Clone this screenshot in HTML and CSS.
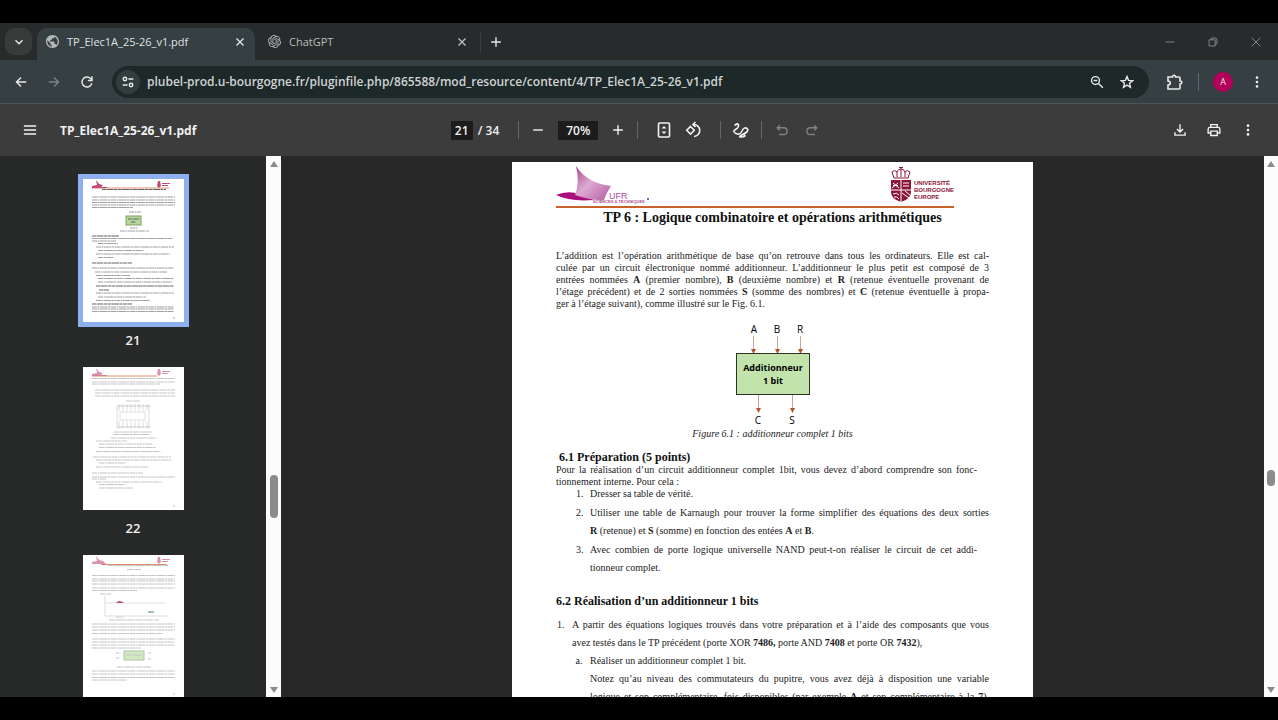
FILE: index.html
```html
<!DOCTYPE html>
<html lang="fr">
<head>
  <meta charset="UTF-8" />
  <title>TP_Elec1A_25-26_v1.pdf</title>
  <link rel="stylesheet" href="styles.css">
</head>
<body>

  <div class="browser">

    <!-- tab strip -->
    <div class="tab-strip">
      <button class="tab-search" aria-label="Rechercher dans les onglets">
        <svg class="icon" viewBox="0 0 16 16"><path d="M4 6l4 4 4-4"/></svg>
      </button>
      <div class="tab active">
        <svg class="favicon" viewBox="2 2 20 20"><path d="M12 2C6.48 2 2 6.48 2 12s4.480 10 10 10 10-4.480 10-10S17.520 2 12 2zm-1 17.930c-3.950-.49-7-3.850-7-7.930 0-.62.08-1.210.21-1.790L9 15v1c0 1.100.9 2 2 2v1.930zm6.900-2.540c-.26-.81-1-1.390-1.900-1.390h-1v-3c0-.55-.45-1-1-1H8v-2h2c.55 0 1-.45 1-1V7h2c1.100 0 2-.9 2-2v-.41c2.930 1.190 5 4.060 5 7.410 0 2.080-.8 3.970-2.100 5.390z"/></svg>
        <span class="tab-title">TP_Elec1A_25-26_v1.pdf</span>
        <button class="tab-close" aria-label="Fermer"><svg class="icon" viewBox="0 0 16 16"><path d="M4 4l8 8M12 4l-8 8"/></svg></button>
      </div>
      <div class="tab">
        <svg class="favicon" viewBox="0 0 24 24"><path d="M22.2819 9.8211a5.9847 5.9847 0 0 0-.5157-4.9108 6.0462 6.0462 0 0 0-6.5098-2.9A6.0651 6.0651 0 0 0 4.9807 4.1818a5.9847 5.9847 0 0 0-3.9977 2.9 6.0462 6.0462 0 0 0 .7427 7.0966 5.98 5.98 0 0 0 .511 4.9107 6.051 6.051 0 0 0 6.5146 2.9001A5.9847 5.9847 0 0 0 13.2599 24a6.0557 6.0557 0 0 0 5.7718-4.2058 5.9894 5.9894 0 0 0 3.9977-2.9001 6.0557 6.0557 0 0 0-.7475-7.0729zm-9.022 12.6081a4.4755 4.4755 0 0 1-2.8764-1.0408l.1419-.0804 4.7783-2.7582a.7948.7948 0 0 0 .3927-.6813v-6.7369l2.02 1.1686a.071.071 0 0 1 .038.0615v5.5826a4.504 4.504 0 0 1-4.4945 4.4944zm-9.6607-4.1254a4.4708 4.4708 0 0 1-.5346-3.0137l.142.0852 4.783 2.7582a.7712.7712 0 0 0 .7806 0l5.8428-3.3685v2.3324a.0804.0804 0 0 1-.0332.0615L9.74 19.9502a4.4992 4.4992 0 0 1-6.1408-1.6464zM2.3408 7.8956a4.485 4.485 0 0 1 2.3655-1.9728V11.6a.7664.7664 0 0 0 .3879.6765l5.8144 3.3543-2.0201 1.1685a.0757.0757 0 0 1-.071 0l-4.8303-2.7865A4.504 4.504 0 0 1 2.3408 7.872zm16.5963 3.8558L13.1038 8.364 15.1192 7.2a.0757.0757 0 0 1 .071 0l4.8303 2.7913a4.4944 4.4944 0 0 1-.6765 8.1042v-5.6772a.79.79 0 0 0-.407-.667zm2.0107-3.0231l-.142-.0852-4.7735-2.7818a.7759.7759 0 0 0-.7854 0L9.409 9.2297V6.8974a.0662.0662 0 0 1 .0284-.0615l4.8303-2.7866a4.4992 4.4992 0 0 1 6.6802 4.66zM8.3065 12.863l-2.02-1.1638a.0804.0804 0 0 1-.038-.0567V6.0742a4.4992 4.4992 0 0 1 7.3757-3.4537l-.142.0805L8.704 5.459a.7948.7948 0 0 0-.3927.6813zm1.0976-2.3654l2.602-1.4998 2.6069 1.4998v2.9994l-2.5974 1.4997-2.6067-1.4997Z"/></svg>
        <span class="tab-title">ChatGPT</span>
        <button class="tab-close" aria-label="Fermer"><svg class="icon" viewBox="0 0 16 16"><path d="M4 4l8 8M12 4l-8 8"/></svg></button>
      </div>
      <button class="new-tab" aria-label="Nouvel onglet"><svg class="icon" viewBox="0 0 16 16"><path d="M8 2.500v11M2.500 8h11"/></svg></button>
      <div class="window-controls">
        <button aria-label="Réduire"><svg class="icon thin" viewBox="0 0 16 16"><path d="M3 8h10"/></svg></button>
        <button aria-label="Restaurer"><svg class="icon thin" viewBox="0 0 16 16"><path d="M3.500 5.500h7v7h-7zM6 5.500V3.500h4.500q2 0 2 2V10h-2"/></svg></button>
        <button aria-label="Fermer la fenêtre"><svg class="icon thin" viewBox="0 0 16 16"><path d="M3 3l10 10M13 3L3 13"/></svg></button>
      </div>
    </div>

    <!-- address bar -->
    <div class="nav-bar">
      <div class="nav-buttons">
        <button aria-label="Retour"><svg class="icon" viewBox="0 0 16 16"><path d="M14 8H3M8 2.800L2.800 8 8 13.200"/></svg></button>
        <button class="dim" aria-label="Avancer"><svg class="icon" viewBox="0 0 16 16"><path d="M2 8h11M8 2.800L13.200 8 8 13.200"/></svg></button>
        <button aria-label="Actualiser"><svg class="icon" viewBox="0 0 16 16"><path d="M13.500 9.500A5.700 5.700 0 1 1 12.300 4.200L13.500 5.500M13.700 1.500v4.700H9"/></svg></button>
      </div>
      <div class="omnibox">
        <button class="site-info" aria-label="Informations sur le site">
          <svg class="icon" viewBox="0 0 16 16"><circle cx="4.500" cy="4.500" r="2"/><path d="M8.500 4.500H14M2 11.500h5.500"/><circle cx="11.500" cy="11.500" r="2"/></svg>
        </button>
        <input class="url" type="text" aria-label="Adresse" value="plubel-prod.u-bourgogne.fr/pluginfile.php/865588/mod_resource/content/4/TP_Elec1A_25-26_v1.pdf">
        <button aria-label="Zoom"><svg class="icon" viewBox="0 0 16 16"><circle cx="6.300" cy="6.300" r="4.500"/><path d="M9.700 9.700l5 5M4.200 6.300h4.200"/></svg></button>
        <button aria-label="Ajouter aux favoris"><svg class="icon" viewBox="0 0 16 16"><path d="M8 1.800l1.800 4.300 4.600.4-3.500 3 1.100 4.500L8 11.600 4 14l1.100-4.500-3.500-3 4.600-.4z"/></svg></button>
      </div>
      <div class="nav-actions">
        <button aria-label="Extensions"><svg class="icon big" viewBox="0 0 18 18"><path d="M3 4h4.500q0-1.800 1.500-1.800T10.500 4H14q1 0 1 1v3q1.800 0 1.800 1.500T15 11v4q0 1-1 1H3v-4q2.300-.3 2.300-2T3 8z"/></svg></button>
        <span class="divider"></span>
        <button class="avatar" aria-label="Profil">A</button>
        <button aria-label="Menu"><svg class="icon dots" viewBox="0 0 16 16"><circle cx="8" cy="3" r="1.500"/><circle cx="8" cy="8" r="1.500"/><circle cx="8" cy="13" r="1.500"/></svg></button>
      </div>
    </div>

    <!-- pdf toolbar -->
    <div class="pdf-bar">
      <div class="pdf-left">
        <button aria-label="Menu latéral"><svg class="icon" viewBox="0 0 16 16"><path d="M1 3.500h14M1 8h14M1 12.500h14"/></svg></button>
        <h1 class="pdf-name">TP_Elec1A_25-26_v1.pdf</h1>
      </div>
      <div class="pdf-center">
        <div class="pager">
          <input class="page-input" type="text" aria-label="Page" value="21">
          <span>/ 34</span>
        </div>
        <span class="divider"></span>
        <div class="zoomer">
          <button aria-label="Zoom arrière"><svg class="icon" viewBox="0 0 16 16"><path d="M2.500 8h11"/></svg></button>
          <input class="zoom-input" type="text" aria-label="Niveau de zoom" value="70%">
          <button aria-label="Zoom avant"><svg class="icon" viewBox="0 0 16 16"><path d="M8 2.500v11M2.500 8h11"/></svg></button>
        </div>
        <span class="divider"></span>
        <div class="view-tools">
          <button aria-label="Ajuster à la page"><svg class="icon fit" viewBox="0 0 16 16"><rect x="2.500" y="1" width="11" height="14" rx="1"/><path class="solid" d="M5.500 6.500L8 4l2.500 2.500zM5.500 9.500L8 12l2.500-2.500z"/></svg></button>
          <button aria-label="Faire pivoter"><svg class="icon big" viewBox="0 0 18 18"><path d="M5.500 5.500l3.800 3.800-3.800 3.800-3.800-3.800zM8.500 3.500a6 6 0 1 1 .5 12M10.500 1L8 3.500 10.500 6"/></svg></button>
        </div>
        <span class="divider"></span>
        <div class="tools">
          <button aria-label="Annoter"><svg class="icon big" viewBox="0 0 18 18"><path d="M2.500 4.500Q6 1.500 6.500 4T3.500 8.500 4 12.500t6-2.500 5-2.500-3.500 5.500-2 3 3-1.500 3-4"/></svg></button>
        </div>
        <span class="divider"></span>
        <div class="tools">
          <button class="dim" aria-label="Annuler"><svg class="icon" viewBox="0 0 16 16"><path d="M5.500 2.500L2.500 5.500l3 3M3 5.500h7a3.800 3.800 0 0 1 0 7.600H4.500"/></svg></button>
          <button class="dim" aria-label="Rétablir"><svg class="icon" viewBox="0 0 16 16"><path d="M10.500 2.500l3 3-3 3M13 5.500H6a3.800 3.800 0 0 0 0 7.600h5.500"/></svg></button>
        </div>
      </div>
      <div class="pdf-right">
        <button aria-label="Télécharger"><svg class="icon" viewBox="0 0 16 16"><path d="M8 1.500v8.500M4.500 6.800L8 10.300l3.500-3.500M2.200 10.500v3.300h11.600v-3.300"/></svg></button>
        <button aria-label="Imprimer"><svg class="icon" viewBox="0 0 16 16"><path d="M4.300 5V1.800h7.400V5M4.300 11.500H1.300V7q0-2 2-2h9.400q2 0 2 2v4.500h-3M4.300 9.300h7.400v5H4.300z"/></svg></button>
        <button aria-label="Plus d'actions"><svg class="icon dots" viewBox="0 0 16 16"><circle cx="8" cy="3" r="1.500"/><circle cx="8" cy="8" r="1.500"/><circle cx="8" cy="13" r="1.500"/></svg></button>
      </div>
    </div>

    <div class="content">

      <!-- thumbnails -->
      <div class="sidebar">
        <a class="thumb selected" href="#page21">
          <svg class="mini" viewBox="0 0 101 143">
            <path class="mini-rule" d="M9 9h77"/>
            <path class="mini-logo" d="M9 7l5-1-1-5 3 4 4 1-2 2h6v1H9zM75 2h2l1 5-2 2-2-2zM79 4h8v1h-8zM79 6h6v1h-6z"/>
            <path class="mini-bold" d="M19 10.500h64M9 57h27M9 84h40M13 107h78M16 111h10M9 125h40"/>
            <path class="mini-text" d="M9 18h83M9 21h83M9 23.500h83M9 26h83M9 28.500h41M37 52h29M9 59.500h80M9 62h24M15 64.500h20M13 68h78M15 71.500h46M13 75h74M15 78.500h15M9 89h82M12 93h72M13 96.500h34M15 99.500h76M15 103h74M13 114h78M15 118h48M13 121.500h54M9 128h82M9 130h82M9 132.500h82"/>
            <path class="mini-text" d="M46 33h12M47 49h8M90 139h2"/>
            <rect class="mini-box" x="43" y="37" width="15" height="9"/>
            <path class="mini-bold" d="M45 40h11M48 43h5"/>
          </svg>
          <span class="thumb-label">21</span>
        </a>
        <a class="thumb" href="#page22">
          <svg class="mini" viewBox="0 0 101 143">
            <path class="mini-rule" d="M9 9h65"/>
            <path class="mini-logo soft" d="M9 7l5-1-1-5 3 4 4 1-2 2h6v1H9zM75 2h2l1 5-2 2-2-2zM79 4h8v1h-8zM79 6h6v1h-6z"/>
            <path class="mini-text" d="M9 11.500h83M9 15h83M9 17h68M12 23h80M12 26h80M12 29h80M43 34h14M31 65h38M31 67.500h36M28 71h46M13 74h31M16 77h54M16 80.500h57M13 84.500h65M10 90h78M13 93h76M16 96h27M13 100h52M9 106h51M9 110h83M9 112h14M13 115h66M16 117.500h26M16 121h34M90 139h2"/>
            <path class="mini-line" d="M37 45h25v8H37zM36 37v7M40 37v7M44 37v7M48 37v7M52 37v7M56 37v7M60 37v7M64 37v7M36 54v7M40 54v7M44 54v7M48 54v7M52 54v7M56 54v7M60 54v7M64 54v7M34 38v24M66 38v24"/>
            <path class="mini-text" d="M35 39h32M35 60h32"/>
          </svg>
          <span class="thumb-label">22</span>
        </a>
        <a class="thumb" href="#page23">
          <svg class="mini" viewBox="0 0 101 143">
            <path class="mini-rule" d="M19 9.500h65"/>
            <path class="mini-logo soft" d="M9 7l5-1-1-5 3 4 4 1 3 3-2 1-5-1H9zM75 2h2l1 5-2 2-2-2zM79 4h8v1h-8zM79 6h6v1h-6z"/>
            <path class="mini-text" d="M25 10.500h60M44 14.500h14M9 20.500h83M9 24h83M9 26h83M9 29h83M9 33h83M9 35.500h45M17 39h11M33 62h8M26 65h50M9 69h83M9 72h83M9 75h83M9 78.500h70M9 84h83M9 87h83M9 90h83M9 93h49M33 98h3M65 98h3M33 103h3M65 104h3M34 112h34M9 116h83M9 119h83M9 122.500h83M9 125h35M90 139h2"/>
            <path class="mini-line" d="M22 41v20h63M22 48h60"/>
            <path class="mini-logo" d="M33 48q3-4 8 0z"/>
            <path class="mini-green" d="M65 57h6"/>
            <rect class="mini-box soft" x="41" y="96" width="20" height="9"/>
            <path class="mini-text" d="M43 100h16"/>
          </svg>
        </a>
      </div>
      <div class="scrollbar">
        <span class="arrow up"></span>
        <span class="handle side-handle"></span>
        <span class="arrow down"></span>
      </div>

      <!-- document -->
      <div class="viewer">
        <div class="page" id="page21">
          <div class="page-head">
            <svg class="ufr-logo" viewBox="0 0 94 40">
              <defs>
                <linearGradient id="sail" x1="0" y1="0" x2="1" y2="1">
                  <stop offset="0" stop-color="#a3438f"/>
                  <stop offset=".45" stop-color="#dcabd2"/>
                  <stop offset="1" stop-color="#b55aa3"/>
                </linearGradient>
              </defs>
              <path fill="#a9107c" d="M0 29q11-5 24-1l14 6q-24 2-38-5z"/>
              <path fill="url(#sail)" d="M20 0q11 17 35 20-5 8-7 14-12 1-29-5 5-12 1-29z"/>
              <text class="ufr-name" x="53" y="33">UFR</text>
              <text class="ufr-sub" x="37" y="37">SCIENCES &amp; TECHNIQUES</text>
              <circle cx="92" cy="33" r="1" fill="#3a3a80"/>
            </svg>
            <svg class="ube-logo" viewBox="0 0 64 40">
              <path fill="none" stroke="#8b1538" d="M4 12L2 6q3-3 5 0 1-3 4-3t4 3q2-3 5 0l-2 6zM7 11V6M11 11V1M15 11V6M9 1.500h4"/>
              <path fill="#8b1538" d="M1 14h20v12q0 7-10 10Q1 33 1 26z"/>
              <path fill="none" stroke="#fff" d="M11 14v22M1 24h20M3 17l6 5M8 17l-6 5M3 19.500h5M13 17h6M13 20h6M12 27l7 5M15 25l5 4M3 28q4-2 6 1M4 31q3-1 5 2"/>
              <text class="ube-name" x="24" y="19">UNIVERSITÉ</text>
              <text class="ube-name" x="24" y="26">BOURGOGNE</text>
              <text class="ube-name" x="24" y="33">EUROPE</text>
            </svg>
          </div>
          <h2 class="page-title">TP 6 : Logique combinatoire et opérations arithmétiques</h2>

          <p class="justified intro">L’addition est l’opération arithmétique de base qu’on retrouve dans tous les ordinateurs. Elle est cal-<br>
            culée par un circuit électronique nommé additionneur. L’additionneur le plus petit est composé de 3<br>
            entrées nommées <b>A</b> (premier nombre), <b>B</b> (deuxième nombre) et <b>R</b> (retenue éventuelle provenant de<br>
            l’étage précédent) et de 2 sorties nommées <b>S</b> (somme des nombres) et <b>C</b> (retenue éventuelle à propa-</p>
          <p class="line">ger à l’étage suivant), comme illustré sur le Fig. 6.1.</p>

          <figure class="figure">
            <svg class="adder" viewBox="0 0 80 107">
              <g class="port">
                <text x="21" y="12">A</text>
                <text x="44" y="12">B</text>
                <text x="67" y="12">R</text>
                <text x="25" y="103">C</text>
                <text x="59" y="103">S</text>
              </g>
              <path class="wire" d="M20.500 15v14M44.500 15v14M67.500 15v14M25.500 74v14M59.500 74v14"/>
              <path class="tip" d="M18 28h5l-2.500 5zM42 28h5l-2.500 5zM65 28h5l-2.500 5zM23 87h5l-2.500 5zM57 87h5l-2.500 5z"/>
              <rect class="adder-box" x="3.500" y="32.500" width="73" height="41"/>
              <text class="adder-name" x="40" y="50">Additionneur</text>
              <text class="adder-name" x="40" y="63">1 bit</text>
            </svg>
            <figcaption>Figure 6.1 : additionneur complet 1 bits</figcaption>
          </figure>

          <h3 class="section indent">6.1 Préparation (5 points)</h3>
          <p class="justified short">Pour la réalisation d’un circuit additionneur complet 1bit, vous devez d’abord comprendre son fonc-</p>
          <p class="line">tionnement interne. Pour cela :</p>
          <ol class="steps">
            <li class="tight">Dresser sa table de vérité.</li>
            <li>
              <div class="justified">Utiliser une table de Karnaugh pour trouver la forme simplifier des équations des deux sorties</div>
              <div><b>R</b> (retenue) et <b>S</b> (somme) en fonction des entées <b>A</b> et <b>B</b>.</div>
            </li>
            <li>
              <div class="justified short">Avec combien de porte logique universelle NAND peut-t-on réaliser le circuit de cet addi-</div>
              <div>tionneur complet.</div>
            </li>
          </ol>

          <h3 class="section spaced">6.2 Réalisation d’un additionneur 1 bits</h3>
          <ol class="tasks">
            <li>
              <div class="justified">A partir des équations logiques trouvés dans votre préparation et à l’aide des composants que vous</div>
              <div>avez testés dans le TP précédent (porte XOR <b>7486,</b> porte AND <b>7408</b> et porte OR <b>7432</b>),</div>
              <ol class="subtasks">
                <li>Réaliser un additionneur complet 1 bit.
                  <div class="justified">Notez qu’au niveau des commutateurs du pupitre, vous avez déjà à disposition une variable<br>
                    logique et son complémentaire. fois disponibles (par exemple <b>A</b> et son complémentaire à la <b>7</b>),</div>
                </li>
              </ol>
            </li>
          </ol>
        </div>
      </div>
      <div class="scrollbar main-scrollbar">
        <span class="arrow up"></span>
        <span class="handle page-handle"></span>
        <span class="arrow down"></span>
      </div>
    </div>

  </div>

</body>
</html>
```
FILE: styles.css
```css
* {
  box-sizing: border-box;
}

body {
  margin: 0;
  background-color: #000;
  color: #e8eaea;
  font-family: "Open Sans", "Noto Sans", sans-serif;
  font-size: 12px;
}

.browser {
  display: flex;
  flex-direction: column;
  height: 100vh;
  padding: 23px 0;
}

button {
  display: flex;
  align-items: center;
  justify-content: center;
  width: 20px;
  height: 20px;
  padding: 0;
  border: none;
  background: none;
  color: inherit;
  font-family: inherit;
  cursor: pointer;
}

input {
  padding: 0;
  border: none;
  color: inherit;
  font-family: inherit;
}

p, h1, h2, h3, ol, figure {
  margin: 0;
  padding: 0;
}

.icon {
  width: 14px;
  height: 14px;
  fill: none;
  stroke: currentColor;
  stroke-width: 1.6;
}

.icon.big {
  width: 18px;
  height: 18px;
}

.icon.fit {
  width: 16px;
  height: 16px;
}

.icon.thin {
  stroke-width: 1;
}

.icon.dots,
.solid {
  fill: currentColor;
  stroke: none;
}

.dim {
  color: #7d8283;
}

.divider {
  width: 1px;
  height: 18px;
  background-color: #666;
}

/* tabs */

.tab-strip {
  display: flex;
  align-items: center;
  height: 37px;
  padding: 0 12px 0 5px;
  background-color: #272b2b;
}

.tab-search {
  width: 27px;
  height: 27px;
  margin-right: 5px;
  border-radius: 9px;
  background-color: #393b3b;
}

.tab {
  display: flex;
  align-items: center;
  width: 222px;
  height: 32px;
  padding: 0 5px 5px 13px;
  align-self: flex-end;
  color: #b9bdbd;
  font-size: 11px;
}

.tab.active {
  width: 218px;
  padding-left: 9px;
  border-radius: 10px 10px 0 0;
  background-color: #363f41;
  color: #dfe3e3;
}

.favicon {
  width: 13px;
  height: 13px;
  margin-right: 8px;
  fill: #b4baba;
}

.tab-title {
  flex: 1;
}

.new-tab {
  width: 30px;
  margin-left: 3px;
  border-left: 1px solid #3a3f3f;
}

.window-controls {
  display: flex;
  gap: 23px;
  margin-left: auto;
  color: #8d9191;
}

/* address bar */

.nav-bar {
  display: flex;
  align-items: center;
  height: 44px;
  padding: 0 11px;
  border-bottom: 1px solid #505454;
  background-color: #363f41;
}

.nav-buttons {
  display: flex;
  gap: 13px;
  margin-right: 15px;
}

.omnibox {
  display: flex;
  flex: 1;
  align-items: center;
  gap: 10px;
  height: 32px;
  padding: 0 12px 0 4px;
  border-radius: 16px;
  background-color: #1d2829;
}

.site-info {
  width: 24px;
  height: 24px;
  margin-right: -3px;
  border-radius: 12px;
  background-color: #343d3e;
}

.url {
  flex: 1;
  background: none;
  color: #cfd3d3;
  font-size: 12px;
  font-weight: 600;
}

.nav-actions {
  display: flex;
  align-items: center;
  gap: 14px;
  margin-left: 15px;
}

.avatar {
  border-radius: 10px;
  background-color: #b3005a;
  font-size: 9px;
}

/* pdf toolbar */

.pdf-bar {
  display: grid;
  grid-template-columns: 1fr auto 1fr;
  align-items: center;
  height: 52px;
  padding: 0 20px;
  background-color: #3c3c3c;
  color: #f1f1f1;
  font-weight: 600;
}

.pdf-left,
.pdf-center,
.pdf-right,
.pager,
.zoomer,
.view-tools,
.tools {
  display: flex;
  align-items: center;
}

.pdf-left {
  gap: 20px;
}

.pdf-name {
  font-size: 12px;
  font-weight: 700;
}

.pdf-center {
  margin-left: 5px;
}

.pager {
  gap: 5px;
  padding-right: 19px;
}

.page-input,
.zoom-input {
  width: 22px;
  height: 19px;
  background-color: #1c1c1c;
  font-size: 12px;
  font-weight: 600;
  text-align: center;
}

.zoom-input {
  width: 40px;
}

.zoomer {
  gap: 10px;
  padding: 0 9px;
}

.view-tools {
  gap: 10px;
  padding: 0 16px;
}

.tools {
  gap: 10px;
  padding: 0 10px;
}

.pdf-right {
  justify-content: flex-end;
  gap: 14px;
}

/* main area */

.content {
  display: flex;
  flex: 1;
  min-height: 0;
  overflow: hidden;
}

.sidebar {
  display: flex;
  flex-direction: column;
  align-items: center;
  gap: 17px;
  width: 266px;
  padding-top: 23px;
  overflow: hidden;
  background-color: #282a29;
}

.thumb {
  display: flex;
  flex-direction: column;
  align-items: center;
  gap: 8px;
  color: #f1f1f1;
  font-size: 13px;
  font-weight: 600;
  line-height: 20px;
  text-decoration: none;
}

.mini {
  flex: none;
  width: 101px;
  height: 143px;
  background-color: #fff;
}

.selected .mini {
  outline: 5px solid #8fb0f0;
}

.mini path {
  fill: none;
}

.mini .mini-logo {
  fill: #c04a7c;
}

.mini-rule {
  stroke: #dd9068;
}

.mini-bold {
  stroke: #666;
  stroke-width: 1;
  stroke-dasharray: 4 0.5 7 0.5 3 0.5;
}

.mini-text {
  stroke: #c4c4c4;
  stroke-width: 1;
  stroke-dasharray: 5 0.5 2 0.5 7 0.5 3 0.5;
}

.selected .mini-text {
  stroke: #a0a0a0;
}

.mini-line {
  stroke: #ddd;
  stroke-width: 1;
}

.mini-green {
  stroke: #4f7d68;
}

.mini-box {
  fill: #b5d89b;
  stroke: #7ea067;
}

.soft {
  opacity: 0.6;
}

.scrollbar {
  position: relative;
  display: flex;
  flex: none;
  flex-direction: column;
  align-items: center;
  justify-content: space-between;
  width: 15px;
  padding: 5px 0 4px;
  background-color: #fcfcfc;
}

.main-scrollbar {
  width: 14px;
}

.arrow {
  border: 4px solid transparent;
}

.arrow.up {
  border-top: none;
  border-bottom: 6px solid #8b8b8b;
}

.arrow.down {
  border-bottom: none;
  border-top: 6px solid #8b8b8b;
}

.handle {
  position: absolute;
  width: 8px;
  border-radius: 4px;
  background-color: #8b8b8b;
}

.side-handle {
  top: 59%;
  height: 43px;
}

.page-handle {
  top: 58%;
  height: 16px;
}

.viewer {
  flex: 1;
  padding-top: 6px;
  overflow: hidden;
  background-color: #282828;
}

/* document page */

.page {
  width: 521px;
  height: 736px;
  margin: 0 auto;
  padding: 4px 44px;
  background-color: #fff;
  color: #222;
  font-family: "Liberation Serif", serif;
  font-size: 10px;
  line-height: 12px;
  white-space: nowrap;
}

.page-head {
  display: flex;
  align-items: flex-start;
  justify-content: space-between;
  width: 398px;
  height: 42px;
  border-bottom: 2px solid #c9622a;
}

.ufr-logo {
  width: 94px;
  height: 40px;
}

.ube-logo {
  width: 64px;
  height: 40px;
}

.ufr-name {
  fill: #b04c9b;
  font: 9px "Liberation Sans", sans-serif;
}

.ufr-sub {
  fill: #b04c9b;
  font: bold 4px "Liberation Sans", sans-serif;
}

.ube-name {
  fill: #8b1538;
  font: bold 6px "Liberation Sans", sans-serif;
}

.page-title {
  margin-top: 2px;
  color: #111;
  font-size: 14px;
  line-height: 16px;
  text-align: center;
}

.justified {
  text-align: justify;
  text-align-last: justify;
}

.short {
  padding-right: 12px;
}

.intro {
  margin-top: 24px;
}

.figure {
  display: flex;
  flex-direction: column;
  align-items: center;
  margin-top: 11px;
}

.adder {
  width: 80px;
  height: 107px;
}

.port {
  font: 10px "Open Sans", sans-serif;
  text-anchor: middle;
}

.wire {
  stroke: #c9a595;
}

.tip {
  fill: #b5522b;
}

.adder-box {
  fill: #c3e3ac;
  stroke: #2c3326;
}

.adder-name {
  font: bold 9px "Open Sans", sans-serif;
  text-anchor: middle;
}

.figure figcaption {
  font-style: italic;
}

.section {
  color: #111;
  font-size: 12px;
  line-height: 14px;
}

.section.indent {
  margin-top: 10px;
  padding-left: 3px;
}

.section.spaced {
  margin-top: 17px;
}

.steps {
  padding-left: 30px;
  line-height: 18px;
}

.steps li {
  margin-top: 1px;
  padding-left: 4px;
}

.steps .tight {
  margin: 0 0 4px;
  line-height: 12px;
}

.tasks {
  margin-top: 8px;
  padding-left: 11px;
  line-height: 18px;
}

.tasks li {
  padding-left: 5px;
}

.subtasks {
  padding-left: 13px;
}

.subtasks {
  list-style-type: lower-alpha;
}
```
